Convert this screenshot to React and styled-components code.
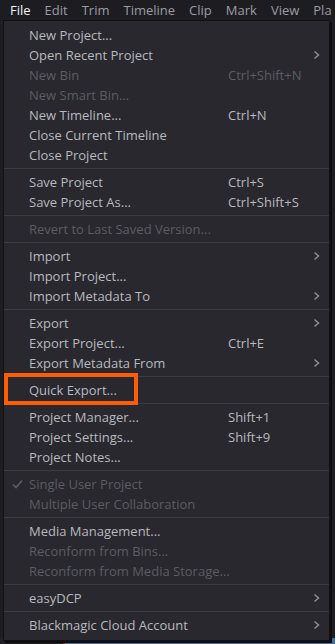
import React from 'react';
import styled, { createGlobalStyle } from 'styled-components';

const GlobalStyle = createGlobalStyle`
  html, body {
    margin: 0;
    padding: 0;
    background: #1b1b1f;
  }
  body {
    font-family: "Open Sans", "Noto Sans", sans-serif;
  }
`;

const Page = styled.div`
  width: 335px;
  height: 644px;
  display: flex;
  flex-direction: column;
  overflow: hidden;
  background: #1b1b1f;
`;

const MenuBar = styled.div`
  height: 20px;
  display: flex;
  align-items: center;
  gap: 14px;
  padding-left: 10px;
  padding-top: 1px;
  box-sizing: border-box;
  background: #1d1d21;
  font-size: 13px;
  white-space: nowrap;
  overflow: hidden;
`;

const BarItem = styled.span`
  color: ${({ active }) => (active ? '#f2f2f2' : '#9b9ba4')};
  line-height: 19px;
`;

const Workspace = styled.div`
  position: relative;
  flex: 1;
  display: flex;
  flex-direction: column;
  justify-content: flex-end;
  background: #1e1e22;
`;

const Timeline = styled.div`
  height: 6px;
  display: flex;
  background: #222226;
`;

const Clip = styled.div`
  margin-left: 63px;
  flex: 1;
  background: #3f6f9e;
  border-left: 2px solid #8a2b2b;
`;

const Dropdown = styled.div`
  position: absolute;
  top: 0;
  left: 3px;
  width: 325px;
  padding: 4px 0 5px;
  background: #28282e;
  border: 1px solid #111114;
  box-shadow: 2px 2px 0 #0e0e10;
  font-size: 13px;
`;

const Row = styled.div`
  display: grid;
  grid-template-columns: 25px 199px 77px 24px;
  align-items: center;
  height: 20px;
  color: ${({ disabled }) => (disabled ? '#5c5c62' : '#b9b9be')};
  white-space: nowrap;
`;

const Check = styled.span`
  display: flex;
  justify-content: center;
  padding-left: 2px;
`;

const Label = styled.span`
  line-height: 20px;
`;

const Shortcut = styled.span`
  line-height: 20px;
`;

const Arrow = styled.span`
  display: flex;
  align-items: center;
  padding-left: 8px;
`;

const Separator = styled.div`
  height: 1px;
  margin: 3px 0;
  background: #3c3c42;
`;

const Highlight = styled.div`
  position: absolute;
  left: 0;
  top: ${({ top }) => top}px;
  width: 134px;
  height: 32px;
  box-sizing: border-box;
  border: 4px solid #ff5c0a;
`;

const Chevron = () => (
  <svg width="7" height="10" viewBox="0 0 7 10">
    <polyline points="1.5,1.5 5.5,5 1.5,8.5" fill="none" stroke="#8d8d93" strokeWidth="1.5" />
  </svg>
);

const Tick = () => (
  <svg width="11" height="10" viewBox="0 0 11 10">
    <polyline points="1,5.5 4,8.5 10,1.5" fill="none" stroke="#5c5c62" strokeWidth="1.6" />
  </svg>
);

const groups = [
  [
    { label: 'New Project...' },
    { label: 'Open Recent Project', sub: true },
    { label: 'New Bin', shortcut: 'Ctrl+Shift+N', disabled: true },
    { label: 'New Smart Bin...', disabled: true },
    { label: 'New Timeline...', shortcut: 'Ctrl+N' },
    { label: 'Close Current Timeline' },
    { label: 'Close Project' },
  ],
  [
    { label: 'Save Project', shortcut: 'Ctrl+S' },
    { label: 'Save Project As...', shortcut: 'Ctrl+Shift+S' },
  ],
  [{ label: 'Revert to Last Saved Version...', disabled: true }],
  [
    { label: 'Import', sub: true },
    { label: 'Import Project...' },
    { label: 'Import Metadata To', sub: true },
  ],
  [
    { label: 'Export', sub: true },
    { label: 'Export Project...', shortcut: 'Ctrl+E' },
    { label: 'Export Metadata From', sub: true },
  ],
  [{ label: 'Quick Export...' }],
  [
    { label: 'Project Manager...', shortcut: 'Shift+1' },
    { label: 'Project Settings...', shortcut: 'Shift+9' },
    { label: 'Project Notes...' },
  ],
  [
    { label: 'Single User Project', disabled: true, checked: true },
    { label: 'Multiple User Collaboration', disabled: true },
  ],
  [
    { label: 'Media Management...' },
    { label: 'Reconform from Bins...', disabled: true },
    { label: 'Reconform from Media Storage...', disabled: true },
  ],
  [{ label: 'easyDCP', sub: true }],
  [{ label: 'Blackmagic Cloud Account', sub: true }],
];

const barItems = ['File', 'Edit', 'Trim', 'Timeline', 'Clip', 'Mark', 'View', 'Pla'];

const App = () => {
  return (
    <Page>
      <GlobalStyle />
      <MenuBar>
        {barItems.map((name, i) => (
          <BarItem key={name} active={i === 0}>{name}</BarItem>
        ))}
      </MenuBar>
      <Workspace>
        <Timeline>
          <Clip />
        </Timeline>
        <Dropdown>
          {groups.map((group, gi) => (
            <React.Fragment key={gi}>
              {gi > 0 && <Separator />}
              {group.map((item) => (
                <Row key={item.label} disabled={item.disabled}>
                  <Check>{item.checked && <Tick />}</Check>
                  <Label>{item.label}</Label>
                  <Shortcut>{item.shortcut}</Shortcut>
                  <Arrow>{item.sub && <Chevron />}</Arrow>
                </Row>
              ))}
            </React.Fragment>
          ))}
          <Highlight top={352} />
        </Dropdown>
      </Workspace>
    </Page>
  );
};

export default App;
